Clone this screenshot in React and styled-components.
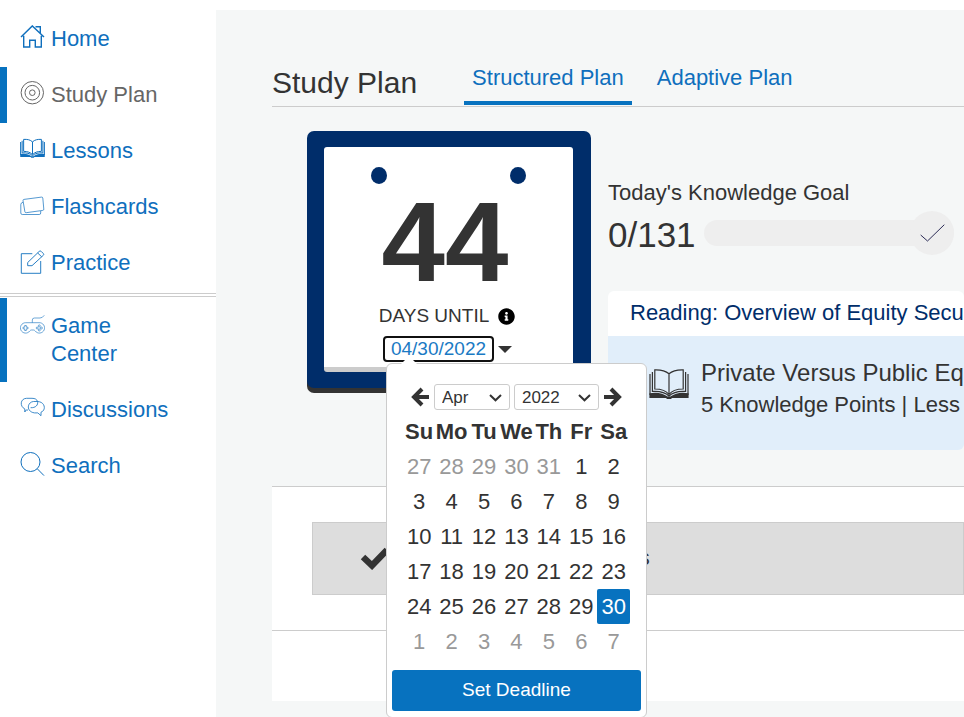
import React, { useState } from "react";
import styled, { createGlobalStyle } from "styled-components";
import { FaInfoCircle } from "react-icons/fa";

const GlobalStyle = createGlobalStyle`
  * {
    box-sizing: border-box;
  }

  body {
    margin: 0;
    background-color: #fff;
    color: #333;
    font-family: "Liberation Sans", Arial, sans-serif;
    font-size: 22px;
    line-height: 28px;
  }

  button, select {
    font-family: inherit;
    color: inherit;
  }
`;

const Page = styled.div`
  display: flex;
  min-height: 100vh;
  max-height: 100vh;
  padding-top: 10px;
  overflow: hidden;
`;

const Sidebar = styled.nav`
  flex: 0 0 216px;
`;

const NavList = styled.ul`
  margin: 0;
  padding: 1px 0 0;
  list-style: none;

  & + & {
    margin-top: 2px;
    border-top: 4px double #ccc;
  }
`;

const NavLink = styled.a`
  display: flex;
  align-items: flex-start;
  gap: 6px;
  padding: 14px 44px 14px 13px;
  border-left: 7px solid ${(props) => (props.$marked ? "#0772bf" : "transparent")};
  color: ${(props) => (props.$current ? "#666" : "#0f6fbd")};
  text-decoration: none;
`;

const NavIcon = styled.svg`
  flex: none;
  width: 25px;
  height: 25px;
  fill: none;
  stroke: currentColor;
  stroke-width: ${(props) => props.$weight || 1};
`;

const Main = styled.main`
  flex: 1;
  min-width: 0;
  padding-left: 56px;
  background-color: #f5f7f7;
`;

const Header = styled.header`
  display: flex;
  align-items: flex-end;
  gap: 47px;
  padding-top: 54px;
  border-bottom: 1px solid #ccc;
`;

const Title = styled.h1`
  margin: 0;
  padding-bottom: 5px;
  font-size: 30px;
  font-weight: normal;
  line-height: 36px;
  white-space: nowrap;
`;

const Tabs = styled.div`
  display: flex;
  gap: 17px;
  margin-bottom: 1px;
`;

const Tab = styled.a`
  padding: 0 8px 9px;
  border-bottom: 4px solid ${(props) => (props.$active ? "#0772bf" : "transparent")};
  color: #0f6fbd;
  text-decoration: none;
  white-space: nowrap;
`;

const Overview = styled.section`
  display: flex;
  align-items: flex-start;
  gap: 17px;
  padding: 24px 0 36px 35px;
`;

const Countdown = styled.div`
  flex: none;
  width: 284px;
  padding: 16px 18px 16px 17px;
  background-color: #002d6a;
  border-radius: 7px;
  box-shadow: 0 5px 0 #333;
`;

const Sheet = styled.div`
  display: flex;
  flex-direction: column;
  align-items: center;
  padding: 20px 0 7px;
  background-color: #fff;
  border-bottom: 5px solid #ccc;
  border-radius: 3px;
`;

const Holes = styled.div`
  display: flex;
  justify-content: space-between;
  align-self: stretch;
  padding: 0 47px 2px;
`;

const Hole = styled.span`
  width: 16px;
  height: 17px;
  border-radius: 50%;
  background-color: #002d6a;
`;

const DayCount = styled.strong`
  padding-right: 7px;
  font-size: 114px;
  line-height: 112px;
`;

const Until = styled.div`
  display: flex;
  align-items: center;
  gap: 9px;
  padding: 4px 3px 0 0;
  font-size: 19px;

  svg {
    width: 17px;
    height: 17px;
    color: #000;
  }
`;

const DateRow = styled.div`
  display: flex;
  align-items: center;
  gap: 6px;
  padding-top: 8px;
`;

const DateAnchor = styled.div`
  position: relative;
`;

const DateLink = styled.a`
  display: block;
  padding: 0 6px;
  color: #1a7ac4;
  font-size: 19px;
  line-height: 22px;
  text-decoration: none;
  border-radius: 2px;
  outline: 2px solid #101010;
`;

const Caret = styled.span`
  border: 7px solid transparent;
  border-top-color: #333;
  border-bottom: 0;
`;

const Popup = styled.div`
  position: absolute;
  top: calc(100% + 3px);
  left: 1px;
  z-index: 10;
  width: 261px;
  padding: 20px 5px 6px;
  background-color: #fff;
  border: 1px solid #ccc;
  border-radius: 6px;

  &::before {
    content: "";
    position: absolute;
    bottom: 100%;
    left: 14px;
    border: 8px solid transparent;
    border-top: 0;
    border-bottom-color: #fff;
  }
`;

const MonthBar = styled.div`
  display: flex;
  align-items: center;
  justify-content: center;
  gap: 4px;
  margin-bottom: 4px;
`;

const ArrowButton = styled.button`
  display: flex;
  padding: 0;
  border: 0;
  background: none;

  svg {
    width: 20px;
    height: 20px;
    fill: none;
    stroke: currentColor;
    stroke-width: 4;
  }
`;

const SelectBox = styled.div`
  position: relative;
  width: ${(props) => props.$width}px;

  svg {
    position: absolute;
    top: 10px;
    right: 8px;
    fill: none;
    stroke: #333;
    stroke-width: 2;
    pointer-events: none;
  }
`;

const Select = styled.select`
  display: block;
  width: 100%;
  height: 26px;
  padding: 0 7px;
  appearance: none;
  background-color: #fff;
  border: 1px solid #ccc;
  border-radius: 3px;
  font-size: 17px;
`;

const Days = styled.table`
  width: 227px;
  margin: 0 auto 11px;
  table-layout: fixed;
  border-collapse: collapse;

  th, td {
    height: 35px;
    padding: 0;
    text-align: center;
  }
`;

const Day = styled.button`
  display: block;
  width: 100%;
  height: 35px;
  padding: 0;
  border: 0;
  border-radius: 2px;
  background-color: ${(props) => (props.$selected ? "#0772bf" : "transparent")};
  color: ${(props) => (props.$selected ? "#fff" : props.$outside ? "#999" : "#333")};
  font-size: 22px;
`;

const SubmitButton = styled.button`
  display: block;
  width: 100%;
  height: 41px;
  padding: 0 0 2px;
  border: 0;
  border-radius: 3px;
  background-color: #0772bf;
  color: #fff;
  font-size: 19px;
`;

const Goal = styled.div`
  flex: 1;
  min-width: 0;
  padding-top: 48px;
`;

const GoalRow = styled.div`
  display: flex;
  align-items: center;
  gap: 8px;
  margin: 4px 10px 36px 0;
`;

const GoalCount = styled.span`
  padding-top: 4px;
  font-size: 35px;
  line-height: 40px;
`;

const Track = styled.div`
  flex: 1;
  display: flex;
  align-items: center;
  justify-content: flex-end;
  height: 26px;
  border-radius: 13px;
  background-color: #eee;
`;

const GoalBadge = styled.span`
  display: flex;
  align-items: center;
  justify-content: center;
  width: 44px;
  height: 44px;
  border-radius: 50%;
  background-color: #eee;

  svg {
    fill: none;
    stroke: #2b2b55;
  }
`;

const Card = styled.article`
  border-radius: 6px;
  overflow: hidden;
  white-space: nowrap;
`;

const CardTitle = styled.h2`
  margin: 0;
  padding: 8px 22px 9px;
  background-color: #fff;
  color: #002d6a;
  font-size: 22px;
  font-weight: normal;
`;

const CardBody = styled.div`
  display: flex;
  gap: 12px;
  padding: 22px 0 30px 41px;
  background-color: #e1eefa;
`;

const BookIcon = styled.svg`
  flex: none;
  width: 40px;
  height: 30px;
  margin-top: 11px;
  fill: none;
  stroke: #333;
  stroke-width: 1.2;
`;

const Lesson = styled.div`
  display: flex;
  flex-direction: column;
  gap: 2px;
`;

const LessonName = styled.span`
  font-size: 24px;
  line-height: 30px;
`;

const LessonInfo = styled.span`
  line-height: 30px;
`;

const Tasks = styled.section`
  padding-bottom: 70px;
  background-color: #fff;
  border-top: 1px solid #ccc;
`;

const TaskGroup = styled.div`
  padding: 35px 0 35px 40px;
  border-bottom: 1px solid #ccc;
`;

const Task = styled.div`
  display: flex;
  align-items: center;
  gap: 24px;
  height: 73px;
  padding: 0 0 2px 47px;
  background-color: #ddd;
  border: 1px solid #ccc;
  white-space: nowrap;

  svg {
    width: 29px;
    height: 24px;
    fill: none;
    stroke: currentColor;
    stroke-width: 6.5;
  }
`;

const BookShape = () => (
  <>
    <path d="M20 4.8C16 1.2 12 .6 5.8.8V20C12 20 17 21.5 20 25.5C23 21.5 28 20 34.2 20V.8C28 .6 24 1.2 20 4.8V25" />
    <path d="M3.4 3V22.4C10 22 16 23 20 27C24 23 30 22 36.6 22.4V3M1 5V26M39 5V26" />
    <path d="M.4 24.2C8 22.8 14 24.2 18.5 27.6H21.5C26 24.2 32 22.8 39.6 24.2V29H23L22 30H18L17 29H.4Z" fill="currentColor" stroke="none" />
  </>
);

const icons = {
  home: (
    <NavIcon viewBox="0 0 25 25" $weight={1.4}>
      <path d="M1 12L12.3.9L24 12M3.7 10.8V22H9.7V15.3H15.3V22H21.3V10.8M15.5 1.7H20.3V7.9" />
    </NavIcon>
  ),
  target: (
    <NavIcon viewBox="0 0 25 25">
      <circle cx="12.3" cy="11.7" r="11.2" />
      <circle cx="12.3" cy="11.7" r="7.3" />
      <circle cx="12.3" cy="11.7" r="2.8" />
    </NavIcon>
  ),
  book: (
    <NavIcon viewBox="0 -3 40 40" $weight={1.6}>
      <BookShape />
    </NavIcon>
  ),
  cards: (
    <NavIcon viewBox="0 0 25 25" $weight={0.7}>
      <path d="M4 6.4L21.5 4.1Q22.6 4 22.8 5L23.8 16.2Q23.9 17.2 22.8 17.4L6.2 19.7Q5.1 19.8 4.9 18.8L3 7.6Q2.9 6.6 4 6.4Z" />
      <path d="M3 9.2Q.8 9.8.8 11.5V20Q.8 21.5 2.3 21.5H19.2Q20.7 21.5 20.7 20V18" />
    </NavIcon>
  ),
  pencil: (
    <NavIcon viewBox="0 0 25 25" $weight={0.9}>
      <path d="M12.3 4.7H1.3V24.3H20.7V12" />
      <path d="M7.7 16.7V13.5L19.2 2.4Q20.2 1.5 21.2 2.4L23.3 4.5Q24.2 5.5 23.3 6.3L12 16.7ZM17.7 4L21.7 7.8" />
    </NavIcon>
  ),
  gamepad: (
    <NavIcon viewBox="0 0 25 25" $weight={0.6}>
      <path d="M12.3 10.7V8Q12.3 6 14.5 6H20Q22.5 6 24.3 3.3" />
      <path d="M5.6 10.7H19A5.2 5.2 0 1 1 15.2 19Q14.5 18 13.5 18H11.5Q10.5 18 9.8 19A5.2 5.2 0 1 1 5.6 10.7Z" />
      <path d="M4.7 13.5H6.3V15.2H8V16.8H6.3V18.5H4.7V16.8H3V15.2H4.7Z" />
      <circle cx="19.3" cy="13.9" r="1" />
      <circle cx="19.3" cy="18" r="1" />
      <circle cx="17.2" cy="16" r="1" />
      <circle cx="21.4" cy="16" r="1" />
    </NavIcon>
  ),
  chat: (
    <NavIcon viewBox="0 0 25 25" $weight={0.8}>
      <path d="M8 14.1Q6.5 14 6.2 13.9L4.8 16V12.9C-.5 10.5.2 2.5 6.5 2.3H12C15 2.3 17 3.4 17.4 5.3C18.6 9 15.5 12 10.6 11.7" />
      <path d="M13.5 5.5H17.5C25.5 5.8 26.2 14.6 21 16.2V19.7L17.8 16.9H14.5C5.7 15.6 7.2 6 13.5 5.5Z" />
    </NavIcon>
  ),
  search: (
    <NavIcon viewBox="0 0 25 25" $weight={1}>
      <circle cx="10.5" cy="10" r="9.5" />
      <path d="M17.3 16.8L24 23.6" />
    </NavIcon>
  ),
};

const studyLinks = [
  { label: "Home", icon: "home" },
  { label: "Study Plan", icon: "target", current: true, marked: true },
  { label: "Lessons", icon: "book" },
  { label: "Flashcards", icon: "cards" },
  { label: "Practice", icon: "pencil" },
];

const moreLinks = [
  { label: "Game Center", icon: "gamepad", marked: true },
  { label: "Discussions", icon: "chat" },
  { label: "Search", icon: "search" },
];

const weekdays = ["Su", "Mo", "Tu", "We", "Th", "Fr", "Sa"];
const months = ["Jan", "Feb", "Mar", "Apr", "May", "Jun", "Jul", "Aug", "Sep", "Oct", "Nov", "Dec"];

// always six rows, filled with the days of the neighbouring months
const getWeeks = (year, month) => {
  const offset = new Date(year, month, 1).getDay();
  return Array.from({ length: 6 }, (_, row) =>
    Array.from({ length: 7 }, (_, col) => new Date(year, month, row * 7 + col + 1 - offset))
  );
};

const NavItems = ({ links }) => (
  <NavList>
    {links.map((link) => (
      <li key={link.label}>
        <NavLink href="#" $current={link.current} $marked={link.marked}>
          {icons[link.icon]}
          <span>{link.label}</span>
        </NavLink>
      </li>
    ))}
  </NavList>
);

const Chevron = () => (
  <svg width="13" height="8" viewBox="0 0 13 8" aria-hidden="true">
    <path d="M1 1L6.5 6.3L12 1" />
  </svg>
);

const DeadlinePicker = () => {
  const [month, setMonth] = useState(3);
  const [year, setYear] = useState(2022);
  const [selected, setSelected] = useState(new Date(2022, 3, 30));

  const moveMonth = (step) => {
    const next = new Date(year, month + step, 1);
    setMonth(next.getMonth());
    setYear(next.getFullYear());
  };

  return (
    <Popup>
      <MonthBar>
        <ArrowButton aria-label="Previous month" onClick={() => moveMonth(-1)}>
          <svg viewBox="0 0 20 20">
            <path d="M12 2L4 10L12 18M5 10H19" />
          </svg>
        </ArrowButton>
        <SelectBox $width={76}>
          <Select aria-label="Month" value={month} onChange={(e) => setMonth(Number(e.target.value))}>
            {months.map((name, i) => (
              <option key={name} value={i}>{name}</option>
            ))}
          </Select>
          <Chevron />
        </SelectBox>
        <SelectBox $width={85}>
          <Select aria-label="Year" value={year} onChange={(e) => setYear(Number(e.target.value))}>
            {[2021, 2022, 2023, 2024].map((y) => (
              <option key={y} value={y}>{y}</option>
            ))}
          </Select>
          <Chevron />
        </SelectBox>
        <ArrowButton aria-label="Next month" onClick={() => moveMonth(1)}>
          <svg viewBox="0 0 20 20">
            <path d="M8 2L16 10L8 18M15 10H1" />
          </svg>
        </ArrowButton>
      </MonthBar>
      <Days>
        <thead>
          <tr>
            {weekdays.map((name) => (
              <th key={name} scope="col">{name}</th>
            ))}
          </tr>
        </thead>
        <tbody>
          {getWeeks(year, month).map((week) => (
            <tr key={week[0].getTime()}>
              {week.map((day) => (
                <td key={day.getTime()}>
                  <Day
                    $outside={day.getMonth() !== month}
                    $selected={day.getTime() === selected.getTime()}
                    onClick={() => setSelected(day)}
                  >
                    {day.getDate()}
                  </Day>
                </td>
              ))}
            </tr>
          ))}
        </tbody>
      </Days>
      <SubmitButton>Set Deadline</SubmitButton>
    </Popup>
  );
};

const App = () => {
  return (
    <>
      <GlobalStyle />
      <Page>
        <Sidebar>
          <NavItems links={studyLinks} />
          <NavItems links={moreLinks} />
        </Sidebar>
        <Main>
          <Header>
            <Title>Study Plan</Title>
            <Tabs>
              <Tab href="#" $active>Structured Plan</Tab>
              <Tab href="#">Adaptive Plan</Tab>
            </Tabs>
          </Header>
          <Overview>
            <Countdown>
              <Sheet>
                <Holes>
                  <Hole />
                  <Hole />
                </Holes>
                <DayCount>44</DayCount>
                <Until>
                  DAYS UNTIL <FaInfoCircle />
                </Until>
                <DateRow>
                  <DateAnchor>
                    <DateLink href="#">04/30/2022</DateLink>
                    <DeadlinePicker />
                  </DateAnchor>
                  <Caret />
                </DateRow>
              </Sheet>
            </Countdown>
            <Goal>
              <div>Today's Knowledge Goal</div>
              <GoalRow>
                <GoalCount>0/131</GoalCount>
                <Track>
                  <GoalBadge>
                    <svg width="25" height="18" viewBox="0 0 25 18">
                      <path d="M.7 11L7.5 17L24.3.7" />
                    </svg>
                  </GoalBadge>
                </Track>
              </GoalRow>
              <Card>
                <CardTitle>Reading: Overview of Equity Securities</CardTitle>
                <CardBody>
                  <BookIcon viewBox="0 0 40 30">
                    <BookShape />
                  </BookIcon>
                  <Lesson>
                    <LessonName>Private Versus Public Equity Securities</LessonName>
                    <LessonInfo>5 Knowledge Points | Less Than 1 Hour</LessonInfo>
                  </Lesson>
                </CardBody>
              </Card>
            </Goal>
          </Overview>
          <Tasks>
            <TaskGroup>
              <Task>
                <svg viewBox="0 0 29 24" aria-hidden="true">
                  <path d="M3 11L12 19.5L27 4" />
                </svg>
                <span>Completed Study Topics</span>
              </Task>
            </TaskGroup>
          </Tasks>
        </Main>
      </Page>
    </>
  );
};

export default App;
